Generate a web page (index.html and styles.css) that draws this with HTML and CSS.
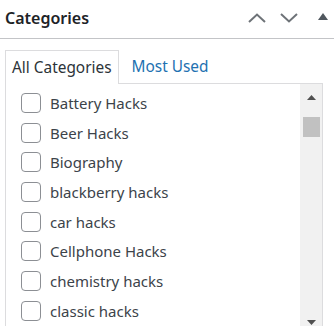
FILE: index.html
```html
<!DOCTYPE html>
<html>
<head>
	<title>Categories</title>
	<link rel="stylesheet" href="styles.css">
</head>
<body>
	<div class="postbox">
		<div class="postbox-header">
			<h2 class="hndle">Categories</h2>
			<div class="handle-actions">
				<svg class="handle-icon" width="18" height="10" viewBox="0 0 18 10"><path d="M1 9 L9 1.5 L17 9" fill="none" stroke="#6e7378" stroke-width="2"/></svg>
				<svg class="handle-icon" width="18" height="10" viewBox="0 0 18 10"><path d="M1 1 L9 8.5 L17 1" fill="none" stroke="#6e7378" stroke-width="2"/></svg>
				<svg class="toggle-icon" width="10" height="7" viewBox="0 0 10 7"><path d="M0 7 L5 0 L10 7 Z" fill="#50575e"/></svg>
			</div>
		</div>
		<div class="inside">
			<div class="category-tabs">
				<div class="tab tab-active">All Categories</div>
				<div class="tab"><a href="#">Most Used</a></div>
				<div class="tab-fill"></div>
			</div>
			<div class="tabs-panel">
				<ul class="categorychecklist">
					<li><span class="check"></span>Battery Hacks</li>
					<li><span class="check"></span>Beer Hacks</li>
					<li><span class="check"></span>Biography</li>
					<li><span class="check"></span>blackberry hacks</li>
					<li><span class="check"></span>car hacks</li>
					<li><span class="check"></span>Cellphone Hacks</li>
					<li><span class="check"></span>chemistry hacks</li>
					<li><span class="check"></span>classic hacks</li>
				</ul>
				<div class="scrollbar">
					<svg class="scroll-arrow" width="9" height="5" viewBox="0 0 9 5"><path d="M0 5 L4.5 0 L9 5 Z" fill="#505050"/></svg>
					<div class="scroll-thumb"></div>
					<div class="scroll-track"></div>
					<svg class="scroll-arrow scroll-down" width="9" height="5" viewBox="0 0 9 5"><path d="M0 0 L4.5 5 L9 0 Z" fill="#505050"/></svg>
				</div>
			</div>
		</div>
	</div>
</body>
</html>
```

FILE: styles.css
```css
body {
  margin: 0;
  background: #fff;
  font-family: "Noto Sans", "Open Sans", sans-serif;
  color: #3c434a;
}

.postbox-header {
  display: flex;
  align-items: center;
  justify-content: space-between;
  height: 38px;
  border-bottom: 1px solid #c3c4c7;
}

.hndle {
  margin: 0 0 3px 5px;
  font-size: 16px;
  font-weight: 600;
  color: #1d2327;
}

.handle-actions {
  display: flex;
  align-items: center;
  gap: 14px;
  margin-right: 6px;
  margin-bottom: 3px;
}

.toggle-icon {
  margin-left: 6px;
  margin-top: -3px;
}

.inside {
  padding: 11px 11px 0 5px;
}

.category-tabs {
  display: flex;
  height: 34px;
}

.tab {
  padding: 0 12px 0 13px;
  font-size: 15.4px;
  line-height: 34px;
  border-bottom: 1px solid #dcdcde;
}

.tab a {
  color: #2271b1;
  text-decoration: none;
}

.tab-active {
  padding: 0 6px 0 6px;
  border: 1px solid #dcdcde;
  border-bottom: none;
  color: #2c3338;
}

.tab-fill {
  flex: 1;
  border-bottom: 1px solid #dcdcde;
}

.tabs-panel {
  display: flex;
  height: 244px;
  border: 1px solid #dcdcde;
  border-top: none;
  overflow: hidden;
}

.categorychecklist {
  flex: 1;
  margin: 0;
  padding: 4px 0 0 15px;
  list-style: none;
}

.categorychecklist li {
  display: flex;
  align-items: center;
  height: 29.7px;
  font-size: 15px;
}

.check {
  width: 18px;
  height: 18px;
  margin-right: 9px;
  border: 1px solid #8c8f94;
  border-radius: 4px;
  background: #fff;
}

.scrollbar {
  display: flex;
  flex-direction: column;
  align-items: center;
  width: 22px;
  background: #f1f1f1;
}

.scroll-arrow {
  margin: 11px 0 7px;
}

.scroll-down {
  margin: 7px 0 3px;
}

.scroll-thumb {
  width: 17px;
  height: 20px;
  margin-top: 10px;
  background: #c1c1c1;
}

.scroll-track {
  flex: 1;
}
```
